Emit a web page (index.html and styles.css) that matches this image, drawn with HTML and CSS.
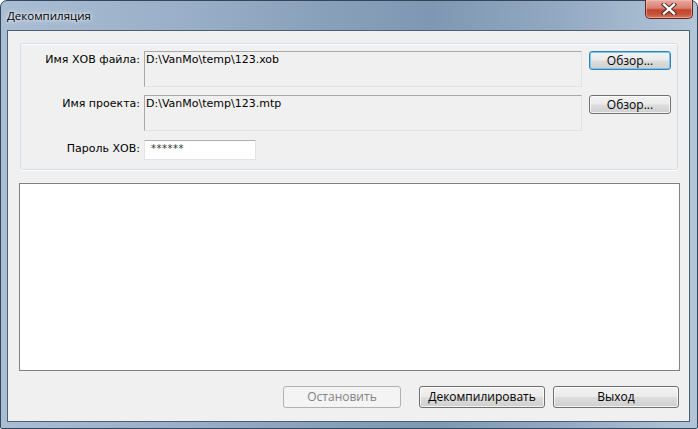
FILE: index.html
```html
<!DOCTYPE html>
<html lang="ru">
<head>
<meta charset="utf-8">
<title>Декомпиляция</title>
<link rel="stylesheet" href="styles.css">
</head>
<body>
<div class="window">
  <div class="titlebar">
    <span class="title">Декомпиляция</span>
    <div class="close">
      <svg width="16" height="12" viewBox="0 0 16 12">
        <path d="M3 1.5 L13 10.5 M13 1.5 L3 10.5" stroke="#3a2020" stroke-width="4.2" stroke-linecap="square" fill="none"/>
        <path d="M3 1.5 L13 10.5 M13 1.5 L3 10.5" stroke="#ffffff" stroke-width="2.4" stroke-linecap="square" fill="none"/>
      </svg>
    </div>
  </div>
  <div class="client">
    <div class="group">
      <label class="lbl lbl-tall">Имя ХОВ файла:</label>
      <div class="field field-tall">D:\VanMo\temp\123.xob</div>
      <button class="btn btn-focus">Обзор...</button>

      <label class="lbl lbl-tall">Имя проекта:</label>
      <div class="field field-tall">D:\VanMo\temp\123.mtp</div>
      <button class="btn">Обзор...</button>

      <label class="lbl lbl-short">Пароль ХОВ:</label>
      <div class="pwd-wrap"><div class="pwd">******</div></div>
      <div></div>
    </div>
    <div class="log"></div>
    <div class="actions">
      <button class="btn btn-big btn-disabled btn-stop">Остановить</button>
      <button class="btn btn-big btn-decomp">Декомпилировать</button>
      <button class="btn btn-big btn-exit">Выход</button>
    </div>
  </div>
</div>
</body>
</html>
```

FILE: styles.css
```css
* { box-sizing: border-box; }
html, body { margin: 0; padding: 0; }
body {
  width: 698px;
  height: 429px;
  overflow: hidden;
  background: #ffffff;
  font-family: "DejaVu Sans", "Liberation Sans", sans-serif;
  font-size: 11px;
  color: #000;
}
.window {
  width: 698px;
  height: 429px;
  border: 1px solid #34465a;
  border-radius: 7px 7px 2px 2px;
  background: linear-gradient(90deg, #a9bdd3 0%, #9bb0c8 25%, #8aa1bb 45%, #7f97b2 62%, #93a9c2 80%, #b3c5d8 100%);
  display: flex;
  flex-direction: column;
  padding: 0 7px 6px 6px;
}
.titlebar {
  height: 29px;
  display: flex;
  align-items: flex-start;
  justify-content: space-between;
}
.title {
  font-family: "Open Sans", "DejaVu Sans", sans-serif;
  font-size: 11.5px;
  margin-top: 7px;
  color: #000;
  text-shadow: 0 0 6px rgba(255,255,255,0.9), 0 0 3px rgba(255,255,255,0.9);
}
.close {
  width: 48px;
  height: 19px;
  margin-top: -1px;
  margin-right: -3px;
  border: 1px solid #5b2a26;
  border-top: none;
  border-radius: 0 0 5px 5px;
  background: linear-gradient(180deg, #e9a99f 0%, #d9806f 45%, #c4432e 55%, #c6543c 80%, #d97c5e 100%);
  box-shadow: inset 0 0 0 1px rgba(255,200,190,0.5);
  display: flex;
  align-items: center;
  justify-content: center;
}
.client {
  flex: 1;
  background: #f0f0f0;
  border: 1px solid #4d5f73;
  padding: 12px 11px 13px 12px;
  display: flex;
  flex-direction: column;
}
.group {
  height: 127px;
  border: 1px solid #d5dfe5;
  border-radius: 3px;
  box-shadow: 0 1px 0 #ffffff, inset 0 1px 0 #ffffff;
  display: grid;
  grid-template-columns: 119px 438px 85px;
  grid-template-rows: 36px 36px 20px;
  column-gap: 4px;
  row-gap: 8px;
  padding: 7px 0 0 0;
}
.group > .btn { margin-left: 3px; }
.lbl {
  text-align: right;
  line-height: 14px;
  padding-top: 2px;
  white-space: nowrap;
}
.lbl-short { padding-top: 3px; }
.field {
  background: #f0f0f0;
  border: 1px solid #a8a8a8;
  border-right-color: #e3e3e3;
  border-bottom-color: #e3e3e3;
  line-height: 14px;
  padding: 1px 0 0 1px;
  white-space: nowrap;
}
.pwd-wrap { display: flex; padding-top: 1px; }
.pwd {
  width: 112px;
  height: 20px;
  background: #ffffff;
  border: 1px solid #e2e3ea;
  border-top-color: #abadb3;
  line-height: 16px;
  padding-left: 6px;
  font-size: 10px;
  letter-spacing: 0.5px;
  color: #333;
}
.btn {
  font-family: "Open Sans", "DejaVu Sans", sans-serif;
  font-size: 12px;
  color: #000;
  height: 19px;
  padding: 0;
  border: 1px solid #707070;
  border-radius: 3px;
  background: linear-gradient(180deg, #f2f2f2 0%, #ebebeb 48%, #dddddd 52%, #cfcfcf 100%);
  box-shadow: inset 0 0 0 1px rgba(255,255,255,0.75);
  line-height: 15px;
  text-align: center;
}
.btn-focus {
  border-color: #3c7fb1;
  box-shadow: inset 0 0 0 1px #6fc8f5;
}
.log {
  margin-top: 13px;
  margin-left: -1px;
  margin-right: -2px;
  flex: 1;
  background: #ffffff;
  border: 1px solid #828282;
}
.actions {
  display: flex;
  justify-content: flex-end;
  margin-top: 15px;
  margin-right: -1px;
}
.btn-big { height: 22px; line-height: 18px; }
.btn-stop { width: 118px; }
.btn-decomp { width: 126px; margin-left: 18px; }
.btn-exit { width: 126px; margin-left: 8px; }
.btn-disabled {
  border-color: #adb2b5;
  background: #f4f4f4;
  box-shadow: none;
  color: #838383;
}
```
